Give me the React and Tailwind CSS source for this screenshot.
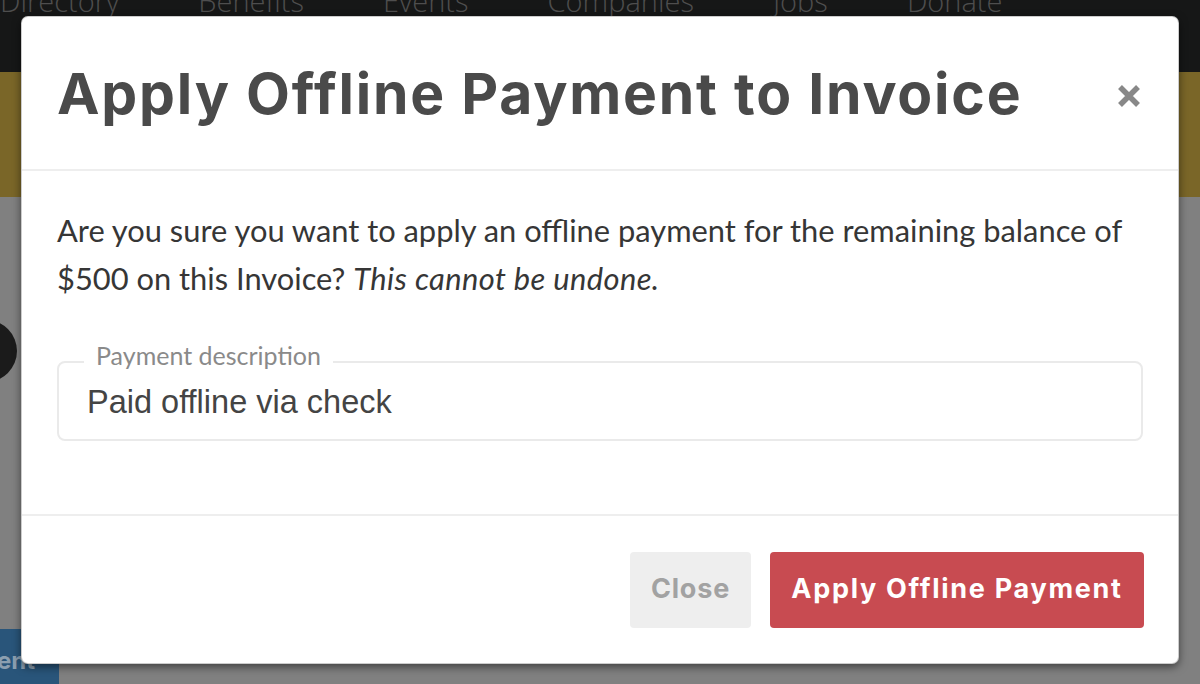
import React from "react";

export default function App() {
  const navItems = ["Directory", "Benefits", "Events", "Companies", "Jobs", "Donate"];
  return (
    <div className="relative w-[1200px] h-[684px] overflow-hidden bg-[#808080]">
      {/* Background page (dimmed by overlay) */}
      <div className="flex flex-col h-full">
        <div className="h-[72px] bg-[#161717] flex items-start overflow-hidden">
          <div
            className="flex gap-[79px] -mt-[19px] text-[29px] font-light text-[#4e4e4e] leading-[40px]"
            style={{ fontFamily: '"Open Sans", sans-serif' }}
          >
            {navItems.map((n) => (
              <span key={n}>{n}</span>
            ))}
          </div>
        </div>
        <div className="h-[125px] bg-[#7a6628]" />
        <div className="flex-1 flex flex-col">
          <div className="mt-[123px] -ml-[45px] w-[62px] h-[62px] rounded-full bg-[#1b1b1b]" />
          <div className="mt-auto w-[59px] h-[55px] bg-[#29557a] overflow-hidden flex items-center">
            <span
              className="-ml-[3px] mt-[8px] text-[24px] font-bold text-[#8c9fb0]"
              style={{ fontFamily: "Inter, sans-serif" }}
            >
              ent
            </span>
          </div>
        </div>
      </div>

      {/* Modal */}
      <div className="absolute left-[21px] top-[16px] w-[1158px] h-[648px] bg-white rounded-[7px] border border-black/20 shadow-[0_3px_9px_rgba(0,0,0,0.5)] flex flex-col">
        <div className="h-[154px] flex items-center justify-between pl-[35px] pr-[36px] border-b-2 border-[#eeeeee]">
          <h1
            className="text-[57px] font-bold text-[#4a4a4a] tracking-[1.8px] leading-none"
            style={{ fontFamily: "Inter, sans-serif" }}
          >
            Apply Offline Payment to Invoice
          </h1>
          <svg width="26" height="26" viewBox="0 0 26 26" className="mt-[6px]">
            <path d="M4 4 L22 22 M22 4 L4 22" stroke="#888888" strokeWidth="5.5" strokeLinecap="butt" />
          </svg>
        </div>

        <div className="flex-1 pt-[36px] pl-[35px] pr-[30px] border-b-2 border-[#eeeeee]">
          <p
            className="text-[30.85px] leading-[48px] text-[#363636] pr-[5px]"
            style={{ fontFamily: "Lato, sans-serif" }}
          >
            Are you sure you want to apply an offline payment for the remaining balance of $500 on this Invoice?{" "}
            <em className="tracking-[0.4px]">This cannot be undone.</em>
          </p>
          <div className="relative mt-[58px] mr-[5px] h-[80px] border-2 border-[#eaeaea] rounded-[8px] flex items-center pl-[28px]">
            <span
              className="absolute left-[25px] -top-[23px] bg-white px-[12px] text-[25px] leading-[30px] text-[#8a8a8a]"
              style={{ fontFamily: "Lato, sans-serif" }}
            >
              Payment description
            </span>
            <span
              className="text-[32.5px] text-[#444444] mt-[2px]"
              style={{ fontFamily: '"Liberation Sans", Arial, sans-serif' }}
            >
              Paid offline via check
            </span>
          </div>
        </div>

        <div className="h-[147px] flex items-center justify-end gap-[19px] pr-[34px]">
          <button
            className="h-[76px] w-[121px] rounded-[4px] bg-[#eeeeee] text-[27px] font-bold tracking-[0.8px] text-[#a2a2a2]"
            style={{ fontFamily: "Inter, sans-serif" }}
          >
            Close
          </button>
          <button
            className="h-[76px] w-[374px] rounded-[4px] bg-[#c84b51] text-[27px] font-bold tracking-[1.7px] text-white"
            style={{ fontFamily: "Inter, sans-serif" }}
          >
            Apply Offline Payment
          </button>
        </div>
      </div>
    </div>
  );
}
